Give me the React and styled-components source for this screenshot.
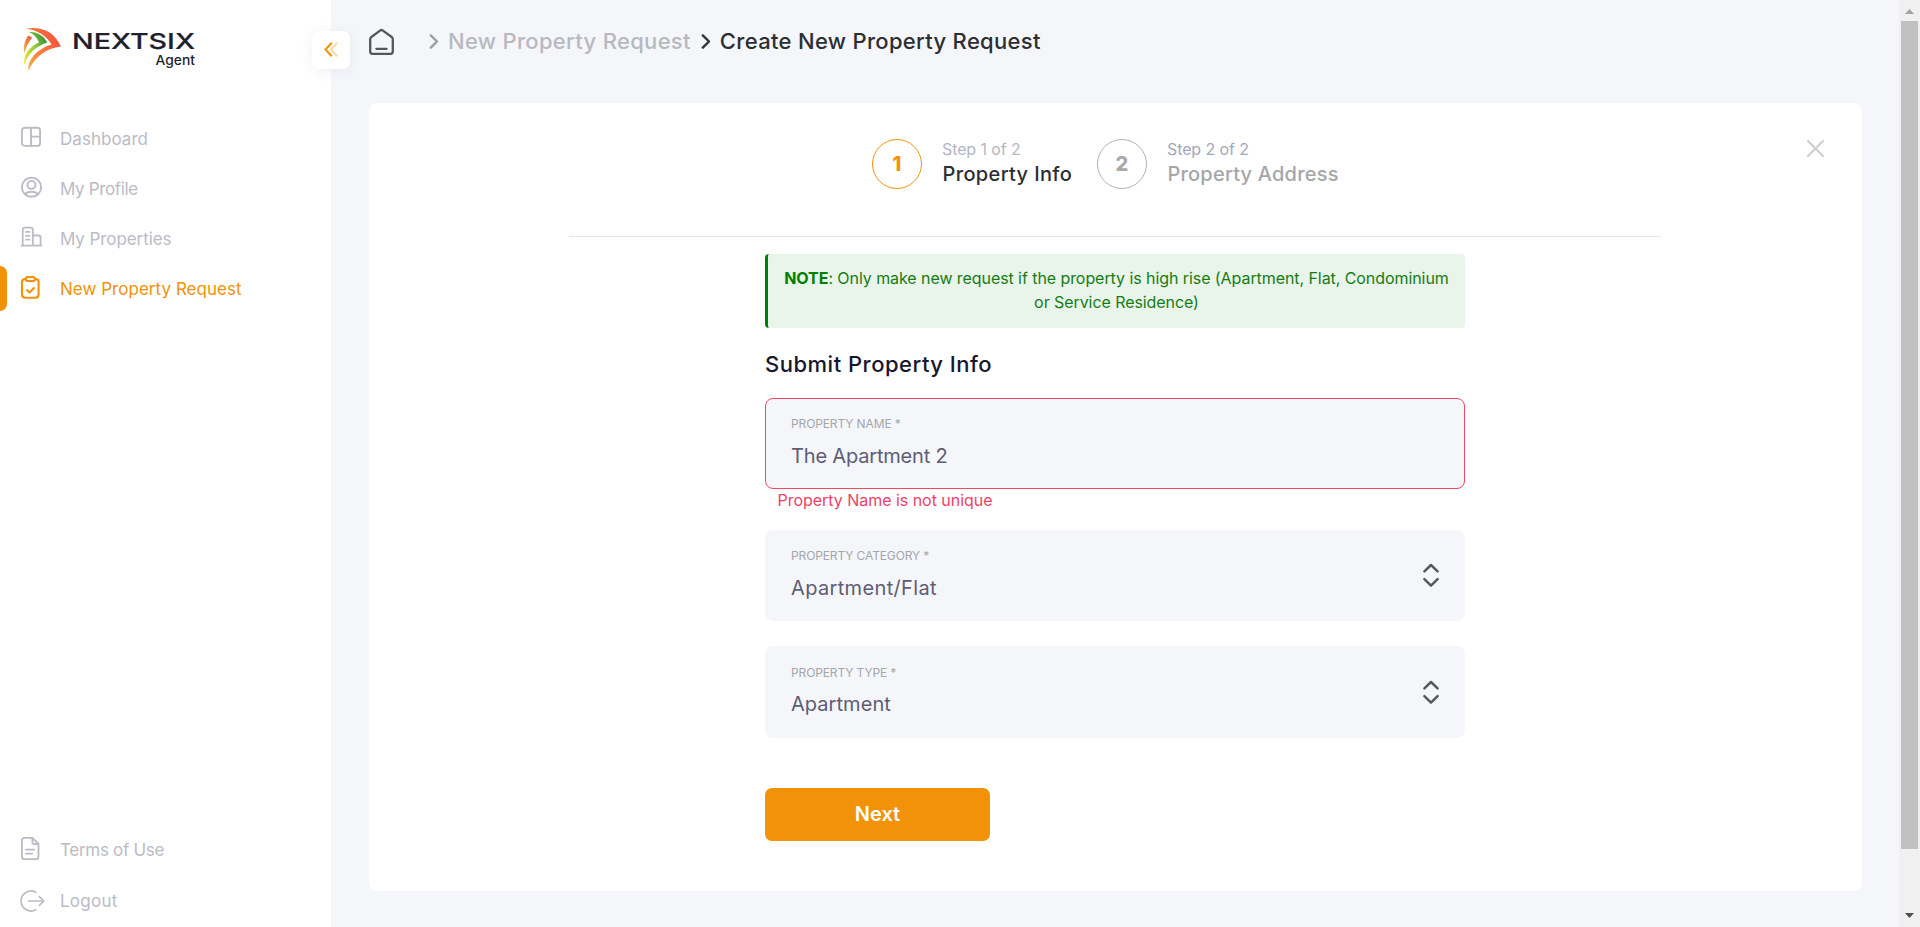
import React from 'react';
import styled, { createGlobalStyle } from 'styled-components';

const GlobalStyle = createGlobalStyle`
  * { box-sizing: border-box; }
  html, body, #root { height: 100%; margin: 0; }
  body {
    background: #f4f6fa;
    font-family: Inter, "Liberation Sans", sans-serif;
    overflow: hidden;
  }
  svg { display: block; flex: none; overflow: visible; }
`;

const Page = styled.div`
  display: flex;
  height: 927px;
  width: 100%;
`;

/* ---------- sidebar ---------- */

const Sidebar = styled.aside`
  position: relative;
  display: flex;
  flex-direction: column;
  width: 331px;
  flex: none;
  background: #fff;
`;

const Brand = styled.div`
  height: 114px;
  padding: 28px 0 0 24px;
`;

const NavList = styled.nav`
  display: flex;
  flex-direction: column;
  gap: ${(p) => p.$gap || 0}px;
`;

const FooterNav = styled(NavList)`
  margin-top: auto;
  padding-bottom: 1px;
`;

const NavItem = styled.a`
  display: flex;
  align-items: center;
  height: 50px;
  color: ${(p) => (p.$active ? '#f29209' : '#bbbbc5')};
  font-size: 17px;
  letter-spacing: ${(p) => p.$ls || 0}px;
  white-space: nowrap;

  &::before {
    content: '';
    width: 7px;
    height: 45px;
    margin: 0 14px 1px 0;
    border-radius: 0 7px 7px 0;
    background: ${(p) => (p.$active ? '#f29209' : 'transparent')};
  }
`;

const NavIcon = styled.span`
  width: 39px;
  padding-bottom: ${(p) => p.$lift ?? 4}px;
`;

const CollapseButton = styled.button`
  position: absolute;
  top: 31px;
  left: 312px;
  display: flex;
  align-items: center;
  justify-content: center;
  width: 38px;
  height: 38px;
  padding: 0 0 1px;
  border: 0;
  border-radius: 7px;
  background: #fff;
  box-shadow: 0 2px 14px rgba(60, 60, 100, 0.07);
`;

/* ---------- main ---------- */

const Main = styled.main`
  flex: 1;
  padding: 0 37px 0 38px;
`;

const Breadcrumb = styled.div`
  display: flex;
  align-items: center;
  height: 103px;
  padding-bottom: 22px;
`;

const Crumb = styled.span`
  font-size: 22px;
  font-weight: 500;
  white-space: nowrap;
  color: ${(p) => (p.$current ? '#2c2e32' : '#b8b8c1')};
  letter-spacing: 0.31px;
`;

const HomeSlot = styled.span`
  width: 60px;
  padding-top: 2px;
`;

const CrumbArrow = styled.span`
  margin: 2px 9px 0 ${(p) => p.$before || 0}px;
`;

const Card = styled.section`
  display: flex;
  flex-direction: column;
  align-items: center;
  height: 788px;
  padding: 36px 1px 0 0;
  border-radius: 8px;
  background: #fff;
`;

const CardHeader = styled.header`
  display: grid;
  grid-template-columns: 1fr 486px 1fr;
  width: 100%;
  height: 97px;
  flex: none;
`;

const Steps = styled.div`
  grid-column: 2;
  display: flex;
`;

const Step = styled.div`
  display: flex;
  gap: 20px;
  width: ${(p) => p.$width}px;
`;

const StepCircle = styled.span`
  display: flex;
  align-items: center;
  justify-content: center;
  width: 50px;
  height: 50px;
  flex: none;
  border: 1px solid ${(p) => (p.$active ? '#f29209' : '#b0b1b3')};
  border-radius: 50%;
  color: ${(p) => (p.$active ? '#f29209' : '#a9aaad')};
  font-size: 20px;
  font-weight: 800;
`;

const StepText = styled.div`
  display: flex;
  flex-direction: column;
  white-space: nowrap;
`;

const StepCount = styled.span`
  font-size: 16px;
  line-height: 21px;
  letter-spacing: -0.1px;
  color: ${(p) => (p.$active ? '#b5b6c4' : '#a3a7bb')};
`;

const StepTitle = styled.span`
  padding-left: 0.5px;
  font-size: 20px;
  font-weight: 500;
  line-height: 28px;
  letter-spacing: ${(p) => (p.$active ? 0.35 : 0.2)}px;
  color: ${(p) => (p.$active ? '#2b2d31' : '#a5a6a9')};
`;

const CloseButton = styled.button`
  justify-self: end;
  align-self: start;
  margin-right: 37px;
  padding: 0.5px 0 0;
  border: 0;
  background: none;
`;

const Divider = styled.hr`
  width: 1092px;
  height: 1px;
  flex: none;
  margin: 0 0 17px;
  border: 0;
  background: #e6e6e8;
`;

const Form = styled.div`
  width: 700px;
`;

const Note = styled.p`
  height: 74px;
  margin: 0;
  padding: 12px 10px 14px;
  border-left: 3px solid #008000;
  border-radius: 4px;
  background: #e9f4ea;
  color: #167d16;
  font-size: 16px;
  line-height: 24px;
  letter-spacing: -0.07px;
  text-align: center;

  b { color: #008000; }
`;

const FormTitle = styled.h2`
  display: flex;
  align-items: center;
  height: 70px;
  margin: 0;
  padding-top: 2px;
  font-size: 22px;
  font-weight: 500;
  letter-spacing: 0.5px;
  color: #17172e;
`;

const Field = styled.div`
  display: flex;
  align-items: center;
  justify-content: space-between;
  height: ${(p) => p.$height || 91}px;
  margin-bottom: ${(p) => p.$after || 0}px;
  padding: 0 25px 0 25px;
  border: 1px solid ${(p) => (p.$invalid ? '#f2495f' : '#f4f6fa')};
  border-radius: 8px;
  background: #f4f6fa;
`;

const FieldText = styled.div`
  display: flex;
  flex-direction: column;
  gap: ${(p) => p.$gap || 12}px;
  padding-bottom: 3px;
`;

const FieldLabel = styled.label`
  font-size: 12px;
  line-height: 16px;
  letter-spacing: -0.12px;
  text-transform: uppercase;
  color: #a5a6aa;
`;

const FieldValue = styled.span`
  font-size: 20px;
  line-height: 24px;
  letter-spacing: ${(p) => p.$ls || 0}px;
  color: #5e5d75;
`;

const FieldError = styled.div`
  height: 41px;
  padding-left: 12.5px;
  font-size: 16px;
  line-height: 23px;
  letter-spacing: -0.03px;
  color: #ef3f66;
`;

const NextButton = styled.button`
  display: block;
  width: 225px;
  height: 53px;
  margin-top: 50px;
  padding: 0 0 1px;
  border: 0;
  border-radius: 7px;
  background: #f29209;
  color: #fff;
  font: 600 20px Inter, sans-serif;
`;

/* ---------- scrollbar ---------- */

const Scrollbar = styled.div`
  display: flex;
  flex-direction: column;
  align-items: center;
  width: 21px;
  flex: none;
  background: #f0f0f1;
`;

const ScrollThumb = styled.div`
  width: 17px;
  height: 828px;
  background: #c1c1c1;
`;

const ScrollArrow = styled.span`
  display: flex;
  align-items: flex-start;
  height: ${(p) => p.$height}px;
  padding-top: ${(p) => p.$top}px;
`;

/* ---------- drawings ---------- */

const Logo = () => (
  <svg width="172" height="44" viewBox="24 28 172 44">
    <defs>
      <linearGradient id="outer" x1="1" y1="0.3" x2="0" y2="1">
        <stop offset="0" stopColor="#f4513b" />
        <stop offset="0.5" stopColor="#f97b40" />
        <stop offset="1" stopColor="#fbb03c" />
      </linearGradient>
      <linearGradient id="middle" x1="1" y1="0.2" x2="0" y2="1">
        <stop offset="0" stopColor="#2b8a3c" />
        <stop offset="0.45" stopColor="#9dc93c" />
        <stop offset="1" stopColor="#f3ee32" />
      </linearGradient>
      <linearGradient id="inner" x1="1" y1="0" x2="0" y2="1">
        <stop offset="0" stopColor="#f4513b" />
        <stop offset="1" stopColor="#fbb03c" />
      </linearGradient>
    </defs>
    <path fill="url(#outer)" d="M26 28.5C42 26 54.5 32 61 46.4C46 48.4 35 56 28.3 71C27.5 60 36 49.5 51.5 44.6C46.5 36 38 30.4 26 28.5Z" />
    <path fill="url(#middle)" d="M28.5 31.8C37.5 31.8 44 36 47.3 42.6C36 46 28 54 24.3 65C23 55.5 29 47 39 42.6C37 37.6 33.5 34 28.5 31.8Z" />
    <path fill="url(#inner)" d="M28.4 35.6L32.2 37.6C28.4 42 26 47 24.4 53.5C23.3 46.5 24.6 40 28.4 35.6Z" />
    <text x="72" y="48.6" fontSize="22" fontWeight="500" fill="#1f1f30" stroke="#1f1f30" strokeWidth="0.2" textLength="123" lengthAdjust="spacingAndGlyphs">NEXTSIX</text>
    <text x="155.5" y="64.5" fontSize="13" fontWeight="500" fill="#1f1f30" textLength="39.5" lengthAdjust="spacingAndGlyphs">Agent</text>
  </svg>
);

const Line = ({ w, h, sw = 1.9, children, color = 'currentColor' }) => (
  <svg width={w} height={h} viewBox={`0 0 ${w} ${h}`} fill="none" stroke={color} strokeWidth={sw} strokeLinecap="round" strokeLinejoin="round">
    {children}
  </svg>
);

const DashboardIcon = () => (
  <Line w={20} h={20}>
    <rect x="0.9" y="0.7" width="18.2" height="18.2" rx="3" />
    <path d="M10 1V19M10 9.6H19" />
  </Line>
);

const ProfileIcon = () => (
  <Line w={21} h={21}>
    <circle cx="10.5" cy="10.2" r="9.6" />
    <circle cx="10.5" cy="7.9" r="4" />
    <path d="M4.4 17.2C5.6 15.2 7.8 14.8 10.5 14.8S15.4 15.2 16.6 17.2" />
  </Line>
);

const PropertiesIcon = () => (
  <Line w={21} h={20} sw={1.8}>
    <path d="M0.6 18.7H20.4M1.7 18.7V3C1.7 1.4 2.4 0.7 3.9 0.7H9.6C11.1 0.7 11.8 1.4 11.8 3V18.7M11.8 8.5H17.4C19 8.5 19.6 9.2 19.6 10.7V18.7M5 4.9H8.4M5 8.8H8.4M5 12.7H8.4" />
  </Line>
);

const RequestIcon = () => (
  <Line w={19} h={23} sw={2.1}>
    <path d="M4.6 3H4.2C2 3 1 4 1 6.2V18.6C1 20.8 2 21.8 4.2 21.8H14.4C16.6 21.8 17.6 20.8 17.6 18.6V6.2C17.6 4 16.6 3 14.4 3H14" />
    <rect x="4.8" y="1" width="9" height="4" rx="1.6" />
    <path d="M6 14.2L8.6 16.4L13 12" />
  </Line>
);

const TermsIcon = () => (
  <Line w={19} h={23} sw={1.8}>
    <path d="M11.4 0.9H3.6C1.8 0.9 0.9 1.8 0.9 3.6V19.4C0.9 21.2 1.8 22.1 3.6 22.1H14.8C16.6 22.1 17.5 21.2 17.5 19.4V7L11.4 0.9V5.2C11.4 6.4 12 7 13.2 7H17.5M5 12.6H13.4M5 16.6H11.2" />
  </Line>
);

const LogoutIcon = () => (
  <Line w={24} h={22} sw={1.7}>
    <path d="M14.8 2.2A10 10 0 1 0 14.8 19.8M7.6 11H22.6M18.4 6.6L22.8 11L18.4 15.4" />
  </Line>
);

const HomeIcon = () => (
  <Line w={25} h={26} sw={2.3} color="#555658">
    <path d="M1.2 10.2C1.2 9.4 1.4 8.8 2 8.3L11.4 1.4C12.1 0.9 12.9 0.9 13.6 1.4L23 8.3C23.6 8.8 23.8 9.4 23.8 10.2V22.6C23.8 24.2 23.2 24.8 21.6 24.8H3.4C1.8 24.8 1.2 24.2 1.2 22.6ZM7.4 19.8H17.6" />
  </Line>
);

const Chevron = ({ color }) => (
  <Line w={10} h={15} sw={2.4} color={color}>
    <path d="M1.8 1.4L8 7.5L1.8 13.6" />
  </Line>
);

const UpDown = () => (
  <Line w={16} h={23} sw={2.5} color="#58585a">
    <path d="M1.4 7.4L8 1L14.6 7.4M1.4 15.2L8 21.6L14.6 15.2" />
  </Line>
);

const mainNav = [
  { label: 'Dashboard', icon: DashboardIcon, ls: 0.04 },
  { label: 'My Profile', icon: ProfileIcon, ls: -0.35 },
  { label: 'My Properties', icon: PropertiesIcon, ls: -0.08 },
  { label: 'New Property Request', icon: RequestIcon, ls: 0.03, active: true, lift: 3 },
];

export default function App() {
  return (
    <Page>
      <GlobalStyle />
      <Sidebar>
        <Brand>
          <Logo />
        </Brand>
        <NavList>
          {mainNav.map(({ label, icon: Icon, ls, active, lift }) => (
            <NavItem key={label} $active={active} $ls={ls}>
              <NavIcon $lift={lift}>
                <Icon />
              </NavIcon>
              {label}
            </NavItem>
          ))}
        </NavList>
        <FooterNav $gap={1}>
          <NavItem $ls={-0.3}>
            <NavIcon $lift={3}>
              <TermsIcon />
            </NavIcon>
            Terms of Use
          </NavItem>
          <NavItem $ls={0.25}>
            <NavIcon $lift={0}>
              <LogoutIcon />
            </NavIcon>
            Logout
          </NavItem>
        </FooterNav>
        <CollapseButton aria-label="Collapse menu">
          <svg width="14" height="15" viewBox="0 0 14 15" fill="none" strokeWidth="2.1">
            <path d="M13.2 0.8L6.9 7.5L13.2 14.2" stroke="#fbd9a8" />
            <path d="M7.8 0.8L1.5 7.5L7.8 14.2" stroke="#f29209" />
          </svg>
        </CollapseButton>
      </Sidebar>

      <Main>
        <Breadcrumb>
          <HomeSlot>
            <HomeIcon />
          </HomeSlot>
          <CrumbArrow>
            <Chevron color="#9c9da2" />
          </CrumbArrow>
          <Crumb>New Property Request</Crumb>
          <CrumbArrow $before={10}>
            <Chevron color="#303236" />
          </CrumbArrow>
          <Crumb $current>Create New Property Request</Crumb>
        </Breadcrumb>

        <Card>
          <CardHeader>
            <Steps>
              <Step $width={225}>
                <StepCircle $active>1</StepCircle>
                <StepText>
                  <StepCount $active>Step 1 of 2</StepCount>
                  <StepTitle $active>Property Info</StepTitle>
                </StepText>
              </Step>
              <Step $width={261}>
                <StepCircle>2</StepCircle>
                <StepText>
                  <StepCount>Step 2 of 2</StepCount>
                  <StepTitle>Property Address</StepTitle>
                </StepText>
              </Step>
            </Steps>
            <CloseButton aria-label="Close">
              <Line w={17} h={17} sw={2.2} color="#cecfd1">
                <path d="M1 1L16 16M16 1L1 16" />
              </Line>
            </CloseButton>
          </CardHeader>
          <Divider />
          <Form>
            <Note>
              <b>NOTE</b>: Only make new request if the property is high rise (Apartment, Flat, Condominium or Service Residence)
            </Note>
            <FormTitle>Submit Property Info</FormTitle>
            <Field $invalid>
              <FieldText>
                <FieldLabel>Property Name *</FieldLabel>
                <FieldValue $ls={-0.18}>The Apartment 2</FieldValue>
              </FieldText>
            </Field>
            <FieldError>Property Name is not unique</FieldError>
            <Field $after={25}>
              <FieldText>
                <FieldLabel>Property Category *</FieldLabel>
                <FieldValue $ls={0.35}>Apartment/Flat</FieldValue>
              </FieldText>
              <UpDown />
            </Field>
            <Field $height={92}>
              <FieldText $gap={11}>
                <FieldLabel>Property Type *</FieldLabel>
                <FieldValue $ls={0.05}>Apartment</FieldValue>
              </FieldText>
              <UpDown />
            </Field>
            <NextButton>Next</NextButton>
          </Form>
        </Card>
      </Main>

      <Scrollbar>
        <ScrollArrow $height={21} $top={9}>
          <svg width="9" height="5" viewBox="0 0 9 5">
            <path d="M0 5L4.5 0L9 5Z" fill="#a3a3a3" />
          </svg>
        </ScrollArrow>
        <ScrollThumb />
        <ScrollArrow $height={78} $top={64}>
          <svg width="9" height="5" viewBox="0 0 9 5">
            <path d="M0 0L4.5 5L9 0Z" fill="#505050" />
          </svg>
        </ScrollArrow>
      </Scrollbar>
    </Page>
  );
}
